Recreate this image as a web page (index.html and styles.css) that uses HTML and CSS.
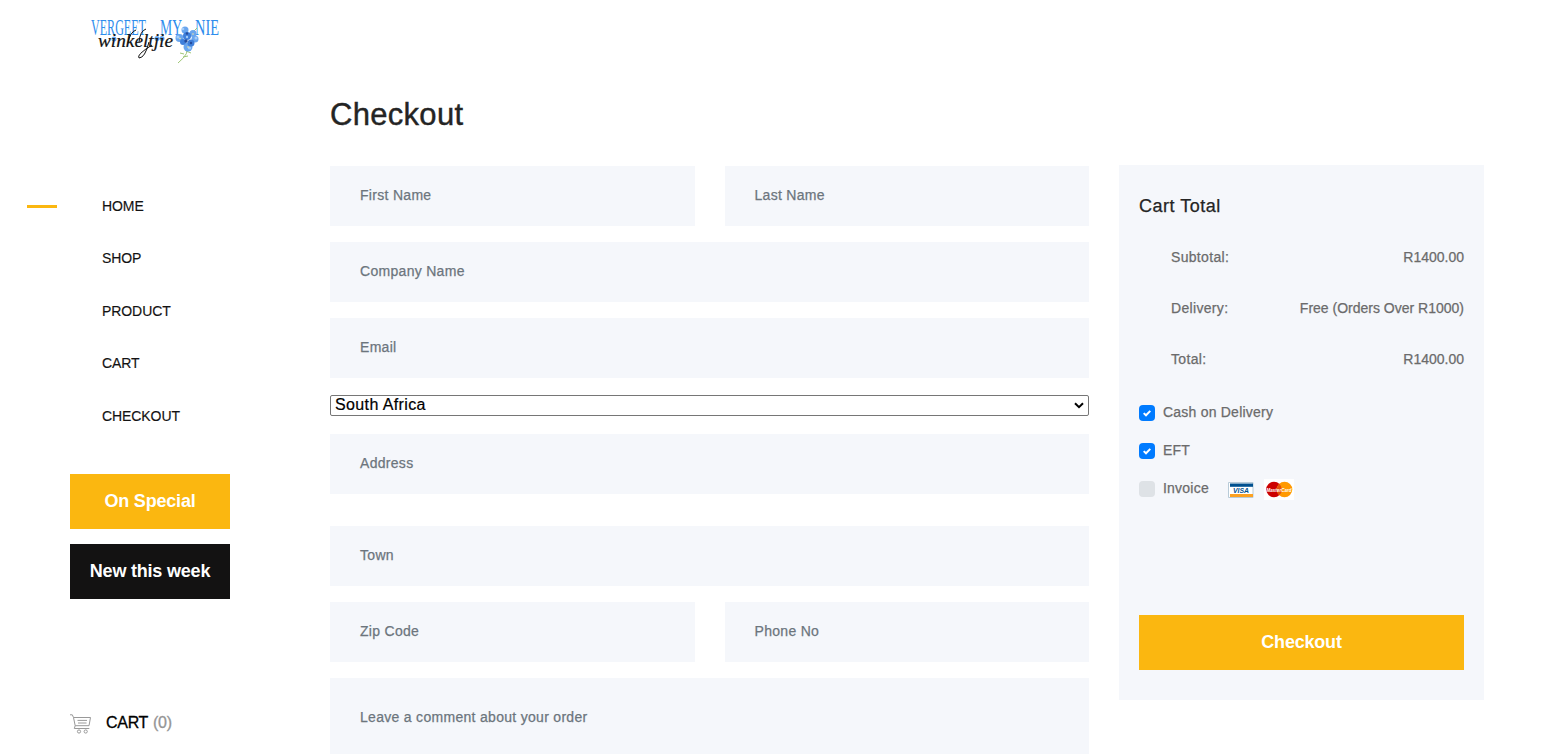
FILE: index.html
```html
<!DOCTYPE html>
<html lang="en">
<head>
<meta charset="utf-8">
<title>Checkout</title>
<link rel="stylesheet" href="styles.css">
</head>
<body>
<div class="page">
  <header class="sidebar">
    <svg class="logo" viewBox="0 0 140 56" role="img">
      <g class="logo-top">
        <text x="5" y="25" textLength="55" lengthAdjust="spacingAndGlyphs">VERGEET</text>
        <text x="74" y="25" textLength="22" lengthAdjust="spacingAndGlyphs">MY</text>
        <text x="109" y="25" textLength="24" lengthAdjust="spacingAndGlyphs">NIE</text>
      </g>
      <g fill="#62a5ef"><circle cx="28" cy="29" r="2.500"/><circle cx="71" cy="28.500" r="2.500"/><circle cx="76" cy="28.500" r="2.500"/></g>
      <path d="M101 36q3 7-9 17M98 44l-4-1M97 47l5-1M100 41l5 2M107 22l4-4" fill="none" stroke="#9fc777" stroke-width="1"/>
      <g fill="#6aa6ee"><circle cx="99" cy="20" r="3.500"/><circle cx="107" cy="23.500" r="3.500"/><circle cx="93.500" cy="28" r="4"/><circle cx="109" cy="29" r="3.500"/><circle cx="102" cy="37" r="4.500"/></g>
      <g fill="#3f7fda"><circle cx="101" cy="26" r="4"/><circle cx="97" cy="32" r="3"/><circle cx="105" cy="33" r="3.500"/></g>
      <g fill="#a5cdf9"><circle cx="97" cy="19" r="1.300"/><circle cx="92" cy="27" r="1.600"/><circle cx="110" cy="28" r="1.500"/><circle cx="103.500" cy="38" r="1.600"/><circle cx="101" cy="27" r="1.200"/></g>
      <g fill="#234a9b"><circle cx="101" cy="23.500" r="1.200"/><circle cx="100" cy="31" r="1.700"/><circle cx="105" cy="33" r="1.200"/></g>
      <g fill="#f2e6a0"><circle cx="94" cy="28.500" r=".8"/><circle cx="102" cy="37" r=".8"/><circle cx="107" cy="24" r=".8"/></g>
      <text class="logo-script" x="12" y="37" textLength="75" lengthAdjust="spacingAndGlyphs">winkeltjie</text>
      <path d="M63 32q-4 16-10 16q-3-3 13-13M53 32q1-11 7-13M42 33q2-11 8-13" fill="none" stroke="#111" stroke-width="1"/>
    </svg>
    <nav class="nav">
      <a class="nav-link active">HOME</a>
      <a class="nav-link">SHOP</a>
      <a class="nav-link">PRODUCT</a>
      <a class="nav-link">CART</a>
      <a class="nav-link">CHECKOUT</a>
    </nav>
    <a class="btn special">On Special</a>
    <a class="btn dark">New this week</a>
    <a class="cart">
      <svg class="cart-icon" viewBox="0 0 22 20" fill="none" stroke="#999">
        <path d="M0 .8h2.300l1.200 2.700h17l-1.500 8.200H5.200L3.500 3.500M5.200 11.700l-.9 2.800h15M7.500 6.400h9.500M8 9h8.500"/>
        <circle cx="9" cy="17.500" r="1.600"/><circle cx="15.700" cy="17.500" r="1.600"/>
      </svg>
      <span class="cart-label">CART</span><span class="cart-count">(0)</span>
    </a>
  </header>
  <main class="main">
    <h2 class="title">Checkout</h2>
    <form class="form">
      <div class="row"><div class="field">First Name</div><div class="field">Last Name</div></div>
      <div class="field">Company Name</div>
      <div class="field">Email</div>
      <div class="select"><span>South Africa</span>
        <svg class="chevron" viewBox="0 0 10 7"><path d="M1 1.200l4 4 4-4" fill="none" stroke="#000" stroke-width="2"/></svg>
      </div>
      <div class="field address">Address</div>
      <div class="field">Town</div>
      <div class="row"><div class="field">Zip Code</div><div class="field">Phone No</div></div>
      <div class="field comment">Leave a comment about your order</div>
    </form>
  </main>
  <aside class="summary">
    <h5 class="summary-title">Cart Total</h5>
    <ul class="totals">
      <li><span>Subtotal:</span><span class="amount">R1400.00</span></li>
      <li><span>Delivery:</span><span class="amount">Free (Orders Over R1000)</span></li>
      <li><span>Total:</span><span class="amount">R1400.00</span></li>
    </ul>
    <div class="payments">
      <div class="pay"><span class="box on"><svg viewBox="0 0 8 8"><path d="M.7 4.100l2.300 2.200L7.300 1.900" fill="none" stroke="#fff" stroke-width="2"/></svg></span><span>Cash on Delivery</span></div>
      <div class="pay"><span class="box on"><svg viewBox="0 0 8 8"><path d="M.7 4.100l2.300 2.200L7.300 1.900" fill="none" stroke="#fff" stroke-width="2"/></svg></span><span>EFT</span></div>
      <div class="pay"><span class="box"></span><span>Invoice</span>
        <svg class="cards" viewBox="0 0 67 21">
          <path d="M.5 3.500h24.500v15H.5z" fill="#fff" stroke="#b8cbd8"/>
          <path d="M2 4.500h23v3.300H2z" fill="#00508f"/><path d="M2 15h23v3H2z" fill="#fca121"/>
          <text class="visa" x="5" y="14.200" textLength="16" lengthAdjust="spacingAndGlyphs">VISA</text>
          <path d="M36 0h30v21H36z" fill="#fff"/>
          <circle cx="46" cy="10.500" r="7.800" fill="#c00"/><circle cx="56.500" cy="10.500" r="7.800" fill="#f90"/>
          <path d="M51.250 4.700a7.800 7.800 0 0 1 0 11.600 7.800 7.800 0 0 1 0-11.600" fill="#e4500a"/>
          <text class="mc" x="38.500" y="12.500" textLength="25" lengthAdjust="spacingAndGlyphs">MasterCard</text>
        </svg>
      </div>
    </div>
    <a class="btn checkout">Checkout</a>
  </aside>
</div>
</body>
</html>
```
FILE: styles.css
```css
* { box-sizing: border-box; }
html, body { margin: 0; height: 754px; overflow: hidden; background: #fff; }
body { font-family: "Liberation Sans", Arial, sans-serif; font-size: 14px; }
.page { display: flex; height: 754px; overflow: hidden; }

.sidebar { width: 330px; flex: none; padding: 10px 0 0 70px; display: flex; flex-direction: column; }
.logo { width: 140px; height: 56px; margin-left: 16px; flex: none; overflow: visible; }
.logo-top { font: 23px "Liberation Serif", serif; fill: #2e8ded; }
.logo-script { font: italic 19px "Liberation Serif", serif; fill: #111; stroke: #111; stroke-width: .2px; }
.nav { margin: 114px 0 0 -43px; display: flex; flex-direction: column; }
.nav-link { height: 52.4px; line-height: 52.4px; padding-left: 75px; color: #131212; display: flex; align-items: center; letter-spacing: -.08px; -webkit-text-stroke: .15px; }
.nav-link.active { padding-left: 0; }
.nav-link.active::before { content: ""; width: 30px; height: 3px; margin-right: 45px; background: #fbb710; }
.btn { width: 160px; height: 55px; line-height: 55px; text-align: center; color: #fff; font-size: 18px; font-weight: 700; letter-spacing: -.2px; white-space: nowrap; flex: none; }
.special { margin-top: 32px; background: #fbb710; }
.dark { margin-top: 15px; background: #131212; }
.cart { margin-top: 110px; height: 28px; display: flex; align-items: center; font-size: 16px; letter-spacing: -.3px; }
.cart-icon { width: 22px; height: 20px; margin: 2px 14px 0 0; }
.cart-label { color: #000; -webkit-text-stroke: .3px; }
.cart-count { color: #959595; margin-left: 5px; -webkit-text-stroke: .3px; }

.main { width: 759px; flex: none; padding-top: 94px; }
.title { margin: 0; font-size: 31px; line-height: 41px; height: 40px; font-weight: 400; color: #242424; letter-spacing: .3px; -webkit-text-stroke: .4px; }
.form { margin-top: 32px; display: flex; flex-direction: column; gap: 16px; }
.row { display: grid; grid-template-columns: 1fr 1fr; gap: 30px; }
.field { height: 60px; line-height: 58px; padding-left: 30px; background: #f5f7fb; color: #6c757d; letter-spacing: .3px; -webkit-text-stroke: .25px; }
.select { height: 21px; margin-top: 1px; border: 1px solid #767676; border-radius: 2px; padding: 0 4px; display: flex; align-items: center; justify-content: space-between; font-size: 16px; line-height: 18px; letter-spacing: .38px; color: #000; -webkit-text-stroke: .2px; }
.select span { margin-top: -2px; }
.chevron { width: 10px; height: 7px; }
.address { margin: 2px 0 16px; }
.comment { height: 100px; line-height: 78px; }

.summary { width: 365px; height: 535px; flex: none; margin: 165px 0 0 30px; padding: 29px 20px 0; background: #f5f7fb; color: #6b6b6b; letter-spacing: .22px; -webkit-text-stroke: .25px; }
.summary-title { margin: 0; font-size: 18px; line-height: 24px; font-weight: 400; color: #242424; letter-spacing: .5px; }
.totals { list-style: none; margin: 14px 0 0; padding: 0 0 0 32px; }
.totals li { display: flex; justify-content: space-between; height: 51px; line-height: 51px; letter-spacing: .32px; }
.totals .amount { letter-spacing: 0; }
.payments { margin-top: 8px; }
.pay { height: 38px; display: flex; align-items: center; }
.box { width: 16px; height: 16px; border-radius: 4px; background: #dee2e6; margin: 2px 8px 0 0; display: flex; align-items: center; justify-content: center; }
.box.on { background: #007bff; }
.box svg { width: 8px; height: 8px; }
.cards { width: 67px; height: 21px; margin: 2px 0 0 19px; overflow: visible; -webkit-text-stroke: 0; }
.visa { font: italic 700 8px "Liberation Sans", sans-serif; fill: #00508f; letter-spacing: 0; }
.mc { font: italic 700 5.5px "Liberation Sans", sans-serif; fill: #fff; letter-spacing: 0; }
.checkout { display: block; width: 325px; margin-top: 108px; background: #fbb710; -webkit-text-stroke: 0; }
```
